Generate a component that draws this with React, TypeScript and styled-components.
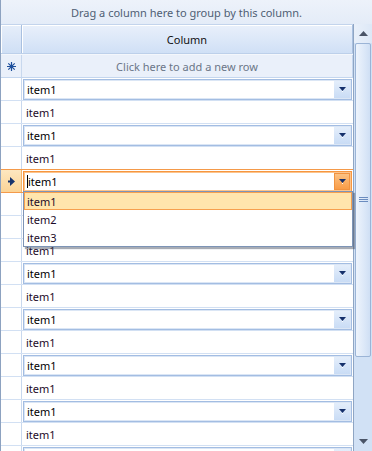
import React from "react";
import styled, { createGlobalStyle } from "styled-components";

const GlobalStyle = createGlobalStyle`
  html, body { margin: 0; padding: 0; background: #ffffff; overflow: hidden; }
  * { box-sizing: border-box; }
`;

const FONT = `"Noto Sans", "Open Sans", "DejaVu Sans", sans-serif`;

const Grid = styled.div`
  width: 372px;
  height: 451px;
  overflow: hidden;
  position: relative;
  background: #ffffff;
  border-left: 1px solid #8da2c0;
  font-family: ${FONT};
  font-size: 11px;
  color: #000;
`;

const GroupPanel = styled.div`
  height: 24px;
  display: flex;
  align-items: center;
  justify-content: center;
  background: linear-gradient(#edf2fa, #e4ecf8);
  color: #4f5e74;
  padding-top: 1px;
`;

const Body = styled.div`
  display: flex;
  height: 427px;
`;

const Main = styled.div`
  width: 352px;
  display: flex;
  flex-direction: column;
  overflow: hidden;
`;

const HeaderRow = styled.div`
  display: flex;
  height: 30px;
  flex: none;
  border-top: 1px solid #c3d4ec;
  border-bottom: 1px solid #bdd0ea;
`;

const HeaderIndicator = styled.div`
  width: 21px;
  flex: none;
  border-right: 1px solid #a9c0e0;
  background: linear-gradient(#e6eefa, #cfdff5);
  box-shadow: inset 1px 1px 0 #ffffff;
`;

const HeaderCell = styled.div`
  flex: 1;
  display: flex;
  align-items: center;
  justify-content: center;
  background: linear-gradient(#e9f0fb, #d0e0f6);
  box-shadow: inset 1px 1px 0 #ffffff;
  border-right: 1px solid #a9c0e0;
  color: #111;
  font-size: 11px;
`;

const NewRow = styled.div`
  display: flex;
  height: 24px;
  flex: none;
  border-bottom: 1px solid #c4d6ee;
  border-top: 1px solid #f4f7fc;
  background: #eaf0fa;
`;

const Indicator = styled.div<{ $current?: boolean }>`
  width: 21px;
  flex: none;
  border-right: 1px solid ${(p) => (p.$current ? "#f3b36c" : "#c8d8ee")};
  display: flex;
  align-items: center;
  justify-content: center;
  background: ${(p) => (p.$current ? "linear-gradient(#fde7c0, #fbd496)" : "transparent")};
`;

const NewRowText = styled.div`
  flex: 1;
  display: flex;
  align-items: center;
  justify-content: center;
  color: #6b7688;
  border-right: 1px solid #c4d6ee;
`;

const Row = styled.div<{ $current?: boolean }>`
  display: flex;
  height: 23px;
  flex: none;
  border-bottom: 1px solid ${(p) => (p.$current ? "#f49a4a" : "#d2e0f3")};
  box-shadow: ${(p) => (p.$current ? "0 -1px 0 #f49a4a" : "none")};
`;

const Cell = styled.div`
  flex: 1;
  display: flex;
  align-items: center;
  padding: 0 0 0 4px;
  color: #1c0b28;
`;

const EditCell = styled.div`
  flex: 1;
  padding: 1px 0 0 1px;
`;

const Combo = styled.div<{ $active?: boolean }>`
  height: 21px;
  width: 329px;
  display: flex;
  align-items: center;
  border: 1px solid ${(p) => (p.$active ? "#f7963f" : "#a3bde2")};
  box-shadow: inset 0 0 0 1px ${(p) => (p.$active ? "#fbc48d" : "#dbe6f5")};
  background: #fff;
  padding: 1px;
`;

const ComboText = styled.div`
  flex: 1;
  padding-left: 2px;
  color: #000;
  display: flex;
  align-items: center;
`;

const Caret = styled.span`
  display: inline-block;
  width: 1px;
  height: 13px;
  background: #000;
  margin-right: 0;
`;

const DropButton = styled.div<{ $active?: boolean }>`
  width: 16px;
  height: 17px;
  display: flex;
  align-items: center;
  justify-content: center;
  background: ${(p) =>
    p.$active
      ? "linear-gradient(#fcc283, #f99c47)"
      : "linear-gradient(#e4eefb, #c9dcf5)"};
  border: ${(p) => (p.$active ? "1px solid #f19340" : "none")};
`;

const ScrollBar = styled.div`
  width: 19px;
  flex: none;
  border-left: 1px solid #8fa5c3;
  background: #d1e1f5;
  display: flex;
  flex-direction: column;
`;

const ScrollButton = styled.div`
  height: 19px;
  flex: none;
  display: flex;
  align-items: center;
  justify-content: center;
  background: linear-gradient(90deg, #e9f0fa, #dde8f7);
`;

const Thumb = styled.div`
  height: 314px;
  flex: none;
  margin: 0 1px;
  border: 1px solid #9bb4d6;
  border-radius: 2px;
  background: linear-gradient(90deg, #eef4fc, #dce8f8 60%, #cfdff4);
  display: flex;
  align-items: center;
  justify-content: center;
`;

const Track = styled.div`
  flex: 1;
`;

const DownButton = styled.div`
  height: 19px;
  flex: none;
  display: flex;
  align-items: center;
  justify-content: center;
`;

const Popup = styled.div`
  position: absolute;
  left: 22px;
  top: 191px;
  width: 330px;
  height: 56px;
  background: #fff;
  border: 1px solid #7d94b6;
  box-shadow: 2px 2px 1px rgba(60, 70, 90, 0.45);
  padding: 0;
  display: flex;
  flex-direction: column;
`;

const PopupItem = styled.div<{ $hot?: boolean }>`
  height: 18px;
  display: flex;
  align-items: center;
  padding-left: ${(p) => (p.$hot ? "2px" : "3px")};
  color: #1c0b28;
  background: ${(p) => (p.$hot ? "#ffe5ad" : "transparent")};
  border: ${(p) => (p.$hot ? "1px solid #f6a04f" : "none")};
`;

const ArrowDown = ({ color = "#15306b" }: { color?: string }) => (
  <svg width="7" height="5" viewBox="0 0 7 5">
    <path d="M0 0h7L3.5 4z" fill={color} />
    <path d="M3 4h1v1H3z" fill="#ffffff" />
  </svg>
);

const ScrollArrow = ({ up }: { up?: boolean }) => (
  <svg width="9" height="5" viewBox="0 0 9 5">
    {up ? <path d="M0 5h9L4.5 0z" fill="#4a5467" /> : <path d="M0 0h9L4.5 5z" fill="#4a5467" />}
  </svg>
);

const Star = () => (
  <svg width="9" height="9" viewBox="0 0 9 9">
    <path d="M4.5 0v9M0 4.5h9M1.3 1.3l6.4 6.4M7.7 1.3L1.3 7.7" stroke="#1d4f9c" strokeWidth="1.2" />
    <circle cx="4.5" cy="4.5" r="1.6" fill="#1d4f9c" />
  </svg>
);

const RowArrow = () => (
  <svg width="7" height="9" viewBox="0 0 7 9">
    <path d="M2 0l5 4.5L2 9z" fill="#17336c" />
    <path d="M0 3.5h3v2H0z" fill="#17336c" />
  </svg>
);

const Grip = () => (
  <svg width="9" height="6" viewBox="0 0 9 6">
    <path d="M0 0.5h9M0 2.5h9M0 4.5h9" stroke="#6b8cbf" strokeWidth="1" />
  </svg>
);

const ROWS = 17;

export default function App() {
  return (
    <>
      <GlobalStyle />
      <Grid>
        <GroupPanel>Drag a column here to group by this column.</GroupPanel>
        <Body>
          <Main>
            <HeaderRow>
              <HeaderIndicator />
              <HeaderCell>Column</HeaderCell>
            </HeaderRow>
            <NewRow>
              <Indicator>
                <Star />
              </Indicator>
              <NewRowText>Click here to add a new row</NewRowText>
            </NewRow>
            {Array.from({ length: ROWS }).map((_, i) => {
              const isCombo = i % 2 === 0;
              const current = i === 4;
              return (
                <Row key={i} $current={current}>
                  <Indicator $current={current}>{current && <RowArrow />}</Indicator>
                  {isCombo ? (
                    <EditCell>
                      <Combo $active={current}>
                        <ComboText>
                          {current && <Caret />}
                          item1
                        </ComboText>
                        <DropButton $active={current}>
                          <ArrowDown />
                        </DropButton>
                      </Combo>
                    </EditCell>
                  ) : (
                    <Cell>item1</Cell>
                  )}
                </Row>
              );
            })}
          </Main>
          <ScrollBar>
            <ScrollButton>
              <ScrollArrow up />
            </ScrollButton>
            <Thumb>
              <Grip />
            </Thumb>
            <Track />
            <DownButton>
              <ScrollArrow />
            </DownButton>
          </ScrollBar>
        </Body>
        <Popup>
          <PopupItem $hot>item1</PopupItem>
          <PopupItem>item2</PopupItem>
          <PopupItem>item3</PopupItem>
        </Popup>
      </Grid>
    </>
  );
}
